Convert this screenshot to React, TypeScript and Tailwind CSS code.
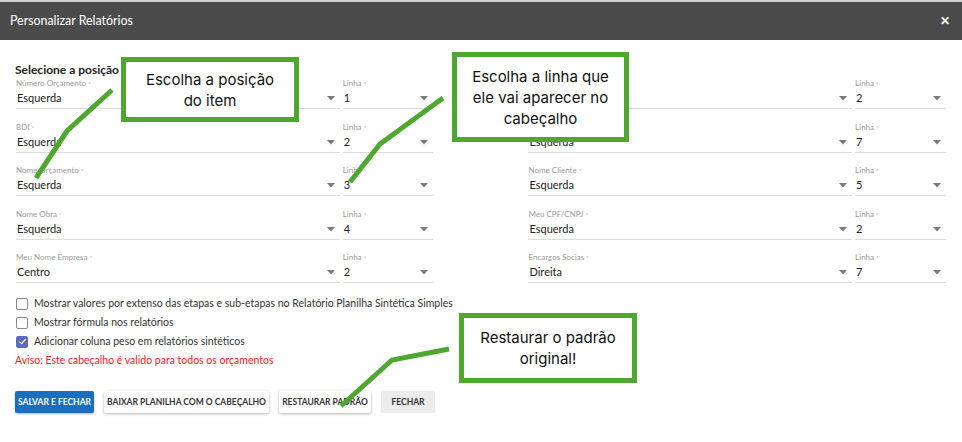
import React from "react";

const F = { fontFamily: 'Lato, "Noto Sans", sans-serif' };

type Row = [string, string, string];
const left: Row[] = [
  ["Número Orçamento", "Esquerda", "1"],
  ["BDI", "Esquerda", "2"],
  ["Nome Orçamento", "Esquerda", "3"],
  ["Nome Obra", "Esquerda", "4"],
  ["Meu Nome Empresa", "Centro", "2"],
];
const right: Row[] = [
  ["Data Orçamento", "Esquerda", "2"],
  ["Nome Empresa", "Esquerda", "7"],
  ["Nome Cliente", "Esquerda", "5"],
  ["Meu CPF/CNPJ", "Esquerda", "2"],
  ["Encargos Socias", "Direita", "7"],
];

function Arrow() {
  return (
    <svg width="8" height="5" viewBox="0 0 8 5" className="shrink-0">
      <path d="M0 0 L8 0 L4 4.5 Z" fill="#7a7a7a" />
    </svg>
  );
}

function Field({ label, value, w }: { label: string; value: string; w: string }) {
  return (
    <div className={`${w} flex flex-col`}>
      <div className="h-[11px] text-[8px] leading-[11px] text-[#9a9a9a] whitespace-nowrap">
        {label} <span className="text-[6px] align-top">*</span>
      </div>
      <div className="h-[20px] flex items-center justify-between border-b border-[#dcdcdc] pl-[1px] pr-[5px]">
        <span className="text-[11px] text-[#222]">{value}</span>
        <Arrow />
      </div>
    </div>
  );
}

function Check({ checked, label }: { checked?: boolean; label: string }) {
  return (
    <div className="flex items-center gap-[6px] h-[19px]">
      {checked ? (
        <div className="w-[12px] h-[12px] rounded-[2px] bg-[#5c6bc0] flex items-center justify-center">
          <svg width="9" height="9" viewBox="0 0 10 10">
            <path d="M1.5 5.2 L4 7.5 L8.5 2.5" stroke="white" strokeWidth="1.3" fill="none" />
          </svg>
        </div>
      ) : (
        <div className="w-[12px] h-[12px] rounded-[2px] border border-[#8a8a8a] bg-white" />
      )}
      <span className="text-[10.5px] text-[#333]">{label}</span>
    </div>
  );
}

function Callout({ lines, cls }: { lines: string[]; cls: string }) {
  return (
    <div
      className={`absolute ${cls} border-[5px] border-[#4ea72e] bg-white flex flex-col items-center justify-center text-[15px] leading-[21px] text-[#111]`}
      style={{ fontFamily: 'Inter, "Noto Sans", sans-serif' }}
    >
      {lines.map((l) => (
        <div key={l}>{l}</div>
      ))}
    </div>
  );
}

const btn = "h-[22px] text-[8.5px] font-bold rounded-[2px] whitespace-nowrap flex items-center justify-center";

export default function App() {
  return (
    <div className="relative w-[962px] h-[442px] bg-white overflow-hidden" style={F}>
      <div className="h-[2px] bg-[#cfcfcf]" />
      <div className="h-[38px] bg-[#4b4b4b] flex items-center justify-between pl-[10px] pr-[12px]">
        <span className="text-white text-[12.4px]">Personalizar Relatórios</span>
        <span className="text-white text-[12px] font-bold">✕</span>
      </div>

      <div className="px-[16px] pt-[23px]">
        <div className="text-[12px] leading-[14px] font-bold text-[#222] mb-[1px] -ml-[1px]">
          Selecione a posição do item no cabeçalho
        </div>
        <div className="flex flex-col gap-[12.5px]">
          {left.map((l, i) => (
            <div key={i} className="flex">
              <Field label={l[0]} value={l[1]} w="w-[324px]" />
              <div className="w-[3px]" />
              <Field label="Linha" value={l[2]} w="w-[90px]" />
              <div className="w-[96px]" />
              <Field label={right[i][0]} value={right[i][1]} w="w-[324px]" />
              <div className="w-[3px]" />
              <Field label="Linha" value={right[i][2]} w="w-[91px]" />
            </div>
          ))}
        </div>

        <div className="mt-[11px] flex flex-col">
          <Check label="Mostrar valores por extenso das etapas e sub-etapas no Relatório Planilha Sintética Simples" />
          <Check label="Mostrar fórmula nos relatórios" />
          <Check checked label="Adicionar coluna peso em relatórios sintéticos" />
          <div className="text-[10.5px] text-[#ff1a1a] h-[19px] leading-[19px] -ml-[1px]">
            Aviso: Este cabeçalho é valido para todos os orçamentos
          </div>
        </div>

        <div className="mt-[21px] flex gap-[10px] -ml-[1px]">
          <button className={`${btn} w-[79px] bg-[#1a6ebd] text-white shadow-[0_1px_2px_rgba(0,0,0,0.3)]`}>
            SALVAR E FECHAR
          </button>
          <button className={`${btn} w-[165px] bg-white text-[#333] shadow-[0_1px_3px_rgba(0,0,0,0.3)]`}>
            BAIXAR PLANILHA COM O CABEÇALHO
          </button>
          <button className={`${btn} w-[92px] bg-white text-[#333] shadow-[0_1px_3px_rgba(0,0,0,0.3)]`}>
            RESTAURAR PADRÃO
          </button>
          <button className={`${btn} w-[54px] bg-[#ebebeb] text-[#333]`}>FECHAR</button>
        </div>
      </div>

      <svg className="absolute left-0 top-0 pointer-events-none" width="962" height="442">
        <polyline points="112,90 67,131 36,178" stroke="#4ea72e" strokeWidth="5" fill="none" />
        <polyline points="443,98 380,144 350,182" stroke="#4ea72e" strokeWidth="5" fill="none" />
        <polyline points="449,349 392,360 341,406" stroke="#4ea72e" strokeWidth="5" fill="none" />
      </svg>

      <Callout lines={["Escolha a posição", "do item"]} cls="left-[121px] top-[57px] w-[178px] h-[65px]" />
      <Callout
        lines={["Escolha a linha que", "ele vai aparecer no", "cabeçalho"]}
        cls="left-[452px] top-[52px] w-[177px] h-[90px]"
      />
      <Callout lines={["Restaurar o padrão", "original!"]} cls="left-[459px] top-[313px] w-[178px] h-[70px]" />
    </div>
  );
}
